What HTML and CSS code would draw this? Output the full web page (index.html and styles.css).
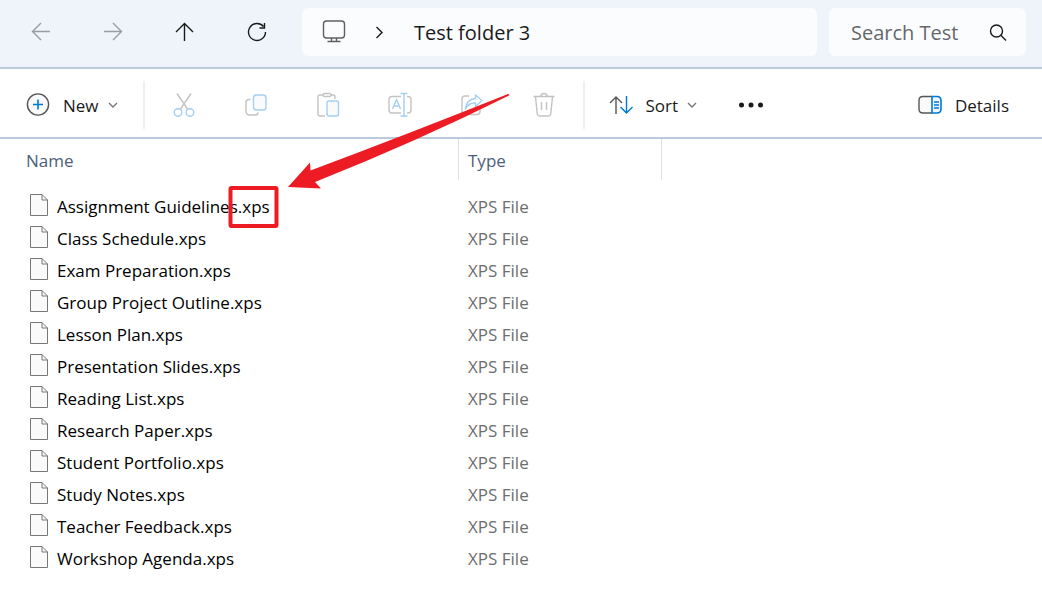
FILE: index.html
```html
<!DOCTYPE html>
<html lang="en">
<head>
    <meta charset="UTF-8">
    <meta name="viewport" content="width=device-width, initial-scale=1.0">
    <title>Test folder 3</title>
    <link rel="stylesheet" href="styles.css">
</head>
<body>
    <header class="navbar">
        <nav class="nav-buttons">
            <button type="button" class="icon-btn" aria-label="Back" disabled>
                <svg width="24" height="24" viewBox="0 0 24 24" stroke="#9a9da0"><path d="M21 11.500H3.500M12 3L3.500 11.500L12 20"/></svg>
            </button>
            <button type="button" class="icon-btn" aria-label="Forward" disabled>
                <svg width="24" height="24" viewBox="0 0 24 24" stroke="#9a9da0"><path d="M3 11.500H20.500M12 3L20.500 11.500L12 20"/></svg>
            </button>
            <button type="button" class="icon-btn" aria-label="Up">
                <svg width="24" height="24" viewBox="0 0 24 24" stroke="#1a1a1a"><path d="M11.500 21V3.500M3 12L11.500 3.500L20 12"/></svg>
            </button>
            <button type="button" class="icon-btn" aria-label="Refresh">
                <svg width="24" height="24" viewBox="0 0 24 24" stroke="#1a1a1a"><path d="M20.500 12A8.500 8.500 0 1 1 18.500 6.500M19.500 3V8H14.500"/></svg>
            </button>
        </nav>
        <div class="address">
            <svg width="24" height="24" viewBox="0 0 24 24" stroke="#5f6062" stroke-width="1.600"><rect x="1.500" y="1" width="21" height="17" rx="3"/><path d="M9.500 18V21.500M14.500 18V21.500M5.500 21.500H18.500"/></svg>
            <svg width="12" height="16" viewBox="0 0 12 16" stroke="#1a1a1a" stroke-width="1.600"><path d="M2.500 3L8 8.500L2.500 14"/></svg>
            <span class="folder">Test folder 3</span>
        </div>
        <div class="search">
            <input type="text" placeholder="Search Test" aria-label="Search Test">
            <svg width="20" height="20" viewBox="0 0 20 20" stroke="#1a1a1a" stroke-width="1.300"><circle cx="8.500" cy="9" r="6"/><path d="M12.800 13.300L18 18.500"/></svg>
        </div>
    </header>

    <div class="toolbar">
        <button type="button" class="tool-btn new">
            <svg width="24" height="24" viewBox="0 0 24 24"><circle cx="12" cy="11.500" r="10.600" fill="#fafafa" stroke="#555"/><path d="M12 6.500V16.500M7 11.500H17" stroke="#0078d4" stroke-width="1.600"/></svg>
            <span>New</span>
            <svg width="10" height="8" viewBox="0 0 10 8" stroke="#777" stroke-width="1.100"><path d="M1 2L5 6L9 2"/></svg>
        </button>
        <span class="divider"></span>
        <div class="tools">
            <button type="button" class="icon-btn" aria-label="Cut" disabled>
                <svg width="24" height="26" viewBox="0 0 24 26" stroke="#c3c3c3"><path d="M5 1.500L15.500 17M19 1.500L8.500 17"/><g stroke="#a3cff0"><circle cx="6" cy="20.500" r="3.800"/><circle cx="18" cy="20.500" r="3.800"/></g></svg>
            </button>
            <button type="button" class="icon-btn" aria-label="Copy" disabled>
                <svg width="24" height="26" viewBox="0 0 24 26" stroke="#c3c3c3"><path d="M6.500 7.500H5Q2 7.500 2 10.500V19Q2 23 6 23H11Q14 23 14 20.500"/><rect x="9.500" y="3" width="12.500" height="15" rx="3" fill="#fafafa" stroke="#a3cff0"/></svg>
            </button>
            <button type="button" class="icon-btn" aria-label="Paste" disabled>
                <svg width="24" height="26" viewBox="0 0 24 26" stroke="#c3c3c3"><path d="M7 3H4Q2 3 2 5V22Q2 24 4 24H9M15 3H17Q19 3 19 5V7"/><rect x="7" y="1.500" width="8" height="3" rx="1.500"/><rect x="11" y="9" width="11.500" height="15" rx="2" fill="#fafafa" stroke="#a3cff0"/></svg>
            </button>
            <button type="button" class="icon-btn" aria-label="Rename" disabled>
                <svg width="26" height="26" viewBox="0 0 26 26" stroke="#c3c3c3"><path d="M14 4.500H5Q2 4.500 2 7.500V18Q2 21 5 21H14M20 4.500H21Q24 4.500 24 7.500V18Q24 21 21 21H20"/><g stroke="#a3cff0"><path d="M5.500 17L9.500 7.500L13.500 17M7 14H12M17 1.500V24M13.500 1.500H20.500M13.500 24H20.500"/></g></svg>
            </button>
            <button type="button" class="icon-btn" aria-label="Share" disabled>
                <svg width="24" height="26" viewBox="0 0 24 26" stroke="#c3c3c3"><path d="M9 4H5Q2 4 2 7V19.500Q2 22.500 5 22.500H17Q20 22.500 20 19.500V17"/><path d="M15.500 3L22 8.500L15.500 14.500V11Q8.500 10.500 5.500 17Q6 7.500 15.500 6.500Z" stroke="#a3cff0" stroke-linejoin="round"/></svg>
            </button>
            <button type="button" class="icon-btn" aria-label="Delete" disabled>
                <svg width="24" height="26" viewBox="0 0 24 26" stroke="#c3c3c3"><path d="M1.500 4.500H22.500M8.500 4.500Q9 1.500 12 1.500T15.500 4.500M3.500 4.500L5.200 21.500Q5.500 24 8 24H16Q18.500 24 18.800 21.500L20.500 4.500M9.500 10V18M14.500 10V18"/></svg>
            </button>
        </div>
        <span class="divider"></span>
        <button type="button" class="tool-btn sort">
            <svg width="24" height="20" viewBox="0 0 24 20"><path d="M7 19V2M1 8L7 2L13 8" stroke="#555"/><path d="M17.500 1V18M11.500 12L17.500 18L23.500 12" stroke="#0078d4"/></svg>
            <span>Sort</span>
            <svg width="10" height="8" viewBox="0 0 10 8" stroke="#777" stroke-width="1.100"><path d="M1 2L5 6L9 2"/></svg>
        </button>
        <button type="button" class="tool-btn more" aria-label="See more">
            <svg width="24" height="6" viewBox="0 0 24 6"><g fill="#1a1a1a"><circle cx="2.500" cy="3" r="2.500"/><circle cx="12" cy="3" r="2.500"/><circle cx="21.500" cy="3" r="2.500"/></g></svg>
        </button>
        <button type="button" class="tool-btn details">
            <svg width="24" height="20" viewBox="0 0 24 20"><path d="M14 1.500H5Q1 1.500 1 5.500V14Q1 18 5 18H14" fill="#fafafa" stroke="#555"/><path d="M14 1.500H19Q23 1.500 23 5.500V14Q23 18 19 18H14ZM16 7H21M16 10H21M16 13H21" fill="#eef6fc" stroke="#0078d4" stroke-width="1.600"/></svg>
            <span>Details</span>
        </button>
    </div>

    <main>
        <!-- page icon shared by every row -->
        <svg class="defs" width="0" height="0">
            <symbol id="file" viewBox="0 0 18 24"><path d="M0.500 0.500H12L17.500 6V21.500H0.500Z" fill="#fafafa"/><path d="M12 0.500V6H17.500"/></symbol>
        </svg>
        <table class="files">
            <thead>
                <tr><th class="name">Name</th><th class="type">Type</th><th aria-hidden="true"></th></tr>
            </thead>
            <tbody>
                <tr><td><div class="file"><svg><use href="#file"/></svg>Assignment Guidelines.xps</div></td><td class="kind">XPS File</td></tr>
                <tr><td><div class="file"><svg><use href="#file"/></svg>Class Schedule.xps</div></td><td class="kind">XPS File</td></tr>
                <tr><td><div class="file"><svg><use href="#file"/></svg>Exam Preparation.xps</div></td><td class="kind">XPS File</td></tr>
                <tr><td><div class="file"><svg><use href="#file"/></svg>Group Project Outline.xps</div></td><td class="kind">XPS File</td></tr>
                <tr><td><div class="file"><svg><use href="#file"/></svg>Lesson Plan.xps</div></td><td class="kind">XPS File</td></tr>
                <tr><td><div class="file"><svg><use href="#file"/></svg>Presentation Slides.xps</div></td><td class="kind">XPS File</td></tr>
                <tr><td><div class="file"><svg><use href="#file"/></svg>Reading List.xps</div></td><td class="kind">XPS File</td></tr>
                <tr><td><div class="file"><svg><use href="#file"/></svg>Research Paper.xps</div></td><td class="kind">XPS File</td></tr>
                <tr><td><div class="file"><svg><use href="#file"/></svg>Student Portfolio.xps</div></td><td class="kind">XPS File</td></tr>
                <tr><td><div class="file"><svg><use href="#file"/></svg>Study Notes.xps</div></td><td class="kind">XPS File</td></tr>
                <tr><td><div class="file"><svg><use href="#file"/></svg>Teacher Feedback.xps</div></td><td class="kind">XPS File</td></tr>
                <tr><td><div class="file"><svg><use href="#file"/></svg>Workshop Agenda.xps</div></td><td class="kind">XPS File</td></tr>
            </tbody>
        </table>
    </main>

    <!-- arrow and box pointing at the extension -->
    <svg class="callout" width="290" height="140" viewBox="0 0 290 140">
        <path d="M60 97L82 72.500L82.500 80.500Q180 44 280 4Q282 4 281 5.500Q190 51 87 92L93 98.500Z" fill="#ed1c24"/>
        <rect x="2.500" y="98" width="46" height="38" rx="1" stroke="#ed1c24" stroke-width="4"/>
    </svg>
</body>
</html>
```
FILE: styles.css
```css
*, *::after, *::before {
    box-sizing: border-box;
}

body {
    margin: 0;
    font-family: "Open Sans", "Segoe UI", sans-serif;
    font-size: 17px;
    color: #1a1a1a;
    background-color: white;
    position: relative;
}

svg {
    display: block;
    flex: none;
    fill: none;
    stroke-width: 1.4;
}

button {
    padding: 0;
    border: none;
    background: none;
    font: inherit;
    color: inherit;
}

/* navigation bar */
.navbar {
    display: flex;
    align-items: center;
    height: 69px;
    padding: 0 16px 3px 5px;
    background-color: #eef4f9;
    border-bottom: 2px solid #baccdc;
}

.nav-buttons, .tools {
    display: flex;
}

.icon-btn {
    display: flex;
    align-items: center;
    justify-content: center;
    width: 72px;
    height: 48px;
}

.address, .search {
    display: flex;
    align-items: center;
    height: 48px;
    border-radius: 6px;
    background-color: #fbfcfe;
    font-size: 20px;
}

.address {
    flex: 1;
    margin: 0 12px 0 9px;
    padding-left: 20px;
}

.folder {
    margin-left: 28px;
}

.address svg + svg {
    margin-left: 28px;
}

.search {
    width: 197px;
    padding: 0 18px 0 22px;
}

.search input {
    flex: 1;
    min-width: 0;
    padding: 0;
    border: none;
    outline: none;
    background: none;
    font: inherit;
}

.search input::placeholder {
    color: #66686a;
    opacity: 1;
}

/* command bar */
.toolbar {
    display: flex;
    align-items: center;
    height: 70px;
    padding: 4px 33px 0 26px;
    border-bottom: 2px solid #baccdc;
}

.tool-btn {
    display: flex;
    align-items: center;
    gap: 13px;
    height: 48px;
}

.new {
    margin-right: 25px;
}

.new svg + span + svg, .sort svg + span + svg {
    margin-left: -4px;
}

.divider {
    width: 2px;
    height: 48px;
    background-color: #efefef;
}

.tools {
    margin: 0 3px;
}

.sort {
    margin-left: 24px;
}

.more {
    margin-left: 42px;
}

.details {
    margin-left: auto;
}

/* file list */
.defs {
    position: absolute;
}

.files {
    width: 100%;
    table-layout: fixed;
    border-collapse: separate;
    border-spacing: 0;
}

.files th {
    height: 41px;
    padding: 2px 0 0 9px;
    font-weight: 400;
    text-align: left;
    color: #4c607a;
}

.files .name {
    width: 459px;
    padding-left: 26px;
    border-right: 1px solid #e2e2e2;
}

.files .type {
    width: 203px;
    border-right: 1px solid #e2e2e2;
}

tbody::before {
    content: "";
    display: block;
    height: 10px;
}

.files td {
    height: 32px;
    padding: 0 0 0 9px;
    color: #000;
}

.files .kind {
    color: #6d6d6d;
}

.file {
    display: flex;
    align-items: center;
    gap: 9px;
    padding-left: 21px;
}

.file svg {
    width: 18px;
    height: 24px;
    stroke: #777;
    stroke-width: 1;
}

.callout {
    position: absolute;
    left: 228px;
    top: 90px;
    pointer-events: none;
}
```
